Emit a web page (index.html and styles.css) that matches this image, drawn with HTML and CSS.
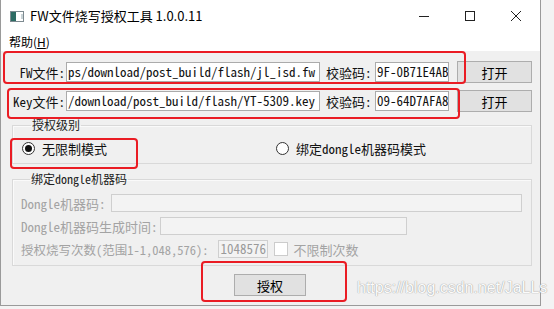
FILE: index.html
```html
<!DOCTYPE html>
<html lang="zh-CN">
  <head>
    <meta name="viewport" content="width=device-width, initial-scale=1.0">
    <link rel="stylesheet" href="styles.css">
  </head>
  <body>
    <div class="window">
      <div class="titlebar">
        <svg class="appIcon" width="14" height="11" viewBox="0 0 14 11">
          <rect x="0.5" y="0.5" width="13" height="10" fill="#fff" stroke="#7d8a90"/>
          <rect x="1" y="1" width="5" height="9" fill="#2c6b63"/>
          <rect x="11" y="3" width="2" height="5" fill="#c9d3d6"/>
        </svg>
        <span class="title">FW文件烧写授权工具 1.0.0.11</span>
        <div class="controls">
          <svg width="12" height="12" viewBox="0 0 12 12"><path d="M1 6.5H11" stroke="#222" stroke-width="1"/></svg>
          <svg width="12" height="12" viewBox="0 0 12 12"><rect x="1.5" y="1.5" width="9" height="9" fill="none" stroke="#222"/></svg>
          <svg width="12" height="12" viewBox="0 0 12 12"><path d="M1 1L11 11M11 1L1 11" stroke="#222" stroke-width="1"/></svg>
        </div>
      </div>
      <div class="menubar"><span>帮助(<u>H</u>)</span></div>

      <div class="content">
        <div class="fileRow">
          <span class="rowLabel">FW文件:</span>
          <div class="field pathField">ps/download/post_build/flash/jl_isd.fw</div>
          <span class="crcLabel">校验码:</span>
          <div class="field crcField">9F-0B71E4AB</div>
          <button class="btn openBtn">打开</button>
        </div>
        <div class="fileRow">
          <span class="rowLabel">Key文件:</span>
          <div class="field pathField">/download/post_build/flash/YT-5309.key</div>
          <span class="crcLabel">校验码:</span>
          <div class="field crcField">09-64D7AFA8</div>
          <button class="btn openBtn">打开</button>
        </div>

        <fieldset class="group levelGroup">
          <legend>授权级别</legend>
          <div class="radioRow">
            <label class="radioItem first"><span class="radio checked"></span>无限制模式</label>
            <label class="radioItem"><span class="radio"></span>绑定dongle机器码模式</label>
          </div>
        </fieldset>

        <fieldset class="group dongleGroup">
          <legend>绑定dongle机器码</legend>
          <div class="dongleRow">
            <span>Dongle机器码:</span>
            <div class="field disabled machineField"></div>
          </div>
          <div class="dongleRow">
            <span>Dongle机器码生成时间:</span>
            <div class="field disabled timeField"></div>
          </div>
          <div class="dongleRow">
            <span class="countLabel">授权烧写次数(范围1-1,048,576):</span>
            <div class="field disabled countField">1048576</div>
            <span class="checkbox"></span>
            <span class="checkText">不限制次数</span>
          </div>
        </fieldset>

        <div class="footerRow">
          <button class="btn authBtn">授权</button>
        </div>
      </div>
    </div>

    <div class="mark mark1"></div>
    <div class="mark mark2"></div>
    <div class="mark mark3"></div>
    <div class="mark mark4"></div>
    <div class="watermark">https://blog.csdn.net/JaLLs</div>
  </body>
</html>
```

FILE: styles.css
```css
body{
  margin: 0;
  background-color: #f3f3f3;
  width: 554px;
  height: 309px;
  overflow: hidden;
  position: relative;
}
.window{
  width: 541px;
  height: 306px;
  box-sizing: border-box;
  border: 1px solid #9a9a9a;
  border-top: none;
  background-color: #f0f0f0;
  font-family: "Noto Sans Mono CJK SC", "Liberation Mono", "Noto Sans CJK SC", monospace;
  font-size: 13px;
  color: #111;
}
.titlebar{
  height: 31px;
  background-color: #fff;
  display: flex;
  align-items: center;
  font-family: "Noto Sans CJK SC", "Liberation Sans", sans-serif;
}
.appIcon{
  margin-left: 9px;
  margin-top: 1px;
}
.title{
  margin-left: 6px;
  font-size: 13px;
  color: #000;
}
.controls{
  margin-left: auto;
  display: flex;
  gap: 34px;
  margin-right: 18px;
}
.menubar{
  height: 20px;
  background-color: #fff;
  display: flex;
  align-items: center;
  padding-left: 8px;
  font-family: "Noto Sans CJK SC", "Liberation Sans", sans-serif;
  font-size: 12px;
  color: #000;
}
.content{
  padding: 10px 8px 0 10px;
}
.fileRow{
  display: flex;
  align-items: center;
  height: 22px;
  margin-bottom: 7px;
}
.rowLabel{
  width: 54px;
  text-align: right;
  white-space: nowrap;
}
.field{
  height: 20px;
  box-sizing: border-box;
  border: 1px solid #ababab;
  background-color: #fff;
  line-height: 18px;
  padding-left: 1px;
  overflow: hidden;
  white-space: nowrap;
}
.pathField{
  margin-left: 1px;
  width: 254px;
}
.crcLabel{
  margin-left: 6px;
  width: 49px;
  white-space: nowrap;
}
.crcField{
  width: 74px;
}
.btn{
  font-family: "Noto Sans CJK SC", "Liberation Sans", sans-serif;
  font-size: 13px;
  color: #000;
  background-color: #e1e1e1;
  border: 1px solid #adadad;
  border-radius: 0;
  padding: 0;
  height: 22px;
}
.openBtn{
  margin-left: 8px;
  width: 75px;
}
.group{
  margin: 0;
  border: 1px solid #d9d9d9;
  box-shadow: inset 1px 1px 0 #fafafa;
  min-width: 0;
}
.group legend{
  font-size: 12px;
  line-height: 14px;
  padding: 0 1px;
  margin-left: 9px;
  color: #222;
}
.levelGroup{
  margin-top: -1px;
  margin-left: 1px;
  padding: 7px 0 6px 9px;
}
.radioRow{
  display: flex;
  align-items: center;
  height: 18px;
}
.radioItem{
  display: flex;
  align-items: center;
  white-space: nowrap;
}
.radioItem.first{
  width: 254px;
}
.radio{
  width: 11px;
  height: 11px;
  border: 1px solid #333;
  border-radius: 50%;
  background-color: #fff;
  margin-right: 7px;
  position: relative;
}
.radio.checked::after{
  content: "";
  position: absolute;
  left: 2px;
  top: 2px;
  width: 7px;
  height: 7px;
  border-radius: 50%;
  background-color: #111;
}
.dongleGroup{
  margin-top: 8px;
  margin-left: 1px;
  padding: 7px 9px 6px 8px;
  color: #a3a3a3;
}
.dongleGroup legend{
  color: #222;
}
.dongleRow{
  display: flex;
  align-items: center;
  height: 20px;
  margin-bottom: 3px;
  white-space: nowrap;
}
.dongleRow:last-child{
  margin-bottom: 0;
}
.field.disabled{
  height: 18px;
  line-height: 16px;
  border-color: #cfcfcf;
  background-color: #f3f3f3;
  color: #9a9a9a;
}
.machineField{
  margin-left: 5px;
  flex: 1;
}
.timeField{
  margin-left: 2px;
  width: 247px;
}
.countLabel{
  font-size: 12.5px;
}
.countField{
  margin-left: 9px;
  width: 50px;
  padding-left: 2px;
}
.checkbox{
  width: 12px;
  height: 12px;
  border: 1px solid #cccccc;
  background-color: #fff;
  margin-left: 6px;
  margin-right: 6px;
}
.footerRow{
  display: flex;
  justify-content: center;
  margin-top: 8px;
}
.authBtn{
  width: 72px;
  margin-left: -3px;
}
.mark{
  position: absolute;
  border: 2px solid #ea1c24;
  border-radius: 4px;
  box-sizing: border-box;
}
.mark1{
  left: 3px;
  top: 51px;
  width: 463px;
  height: 33px;
}
.mark2{
  left: 7px;
  top: 88px;
  width: 453px;
  height: 31px;
}
.mark3{
  left: 10px;
  top: 138px;
  width: 128px;
  height: 31px;
}
.mark4{
  left: 201px;
  top: 261px;
  width: 146px;
  height: 41px;
}
.watermark{
  position: absolute;
  left: 357px;
  top: 279px;
  font-family: "Liberation Sans", Arial, sans-serif;
  font-size: 16px;
  color: #fbfbfb;
  text-shadow: 0 0 1px #9a9a9a, 0 0 1px #b0b0b0;
}
```
